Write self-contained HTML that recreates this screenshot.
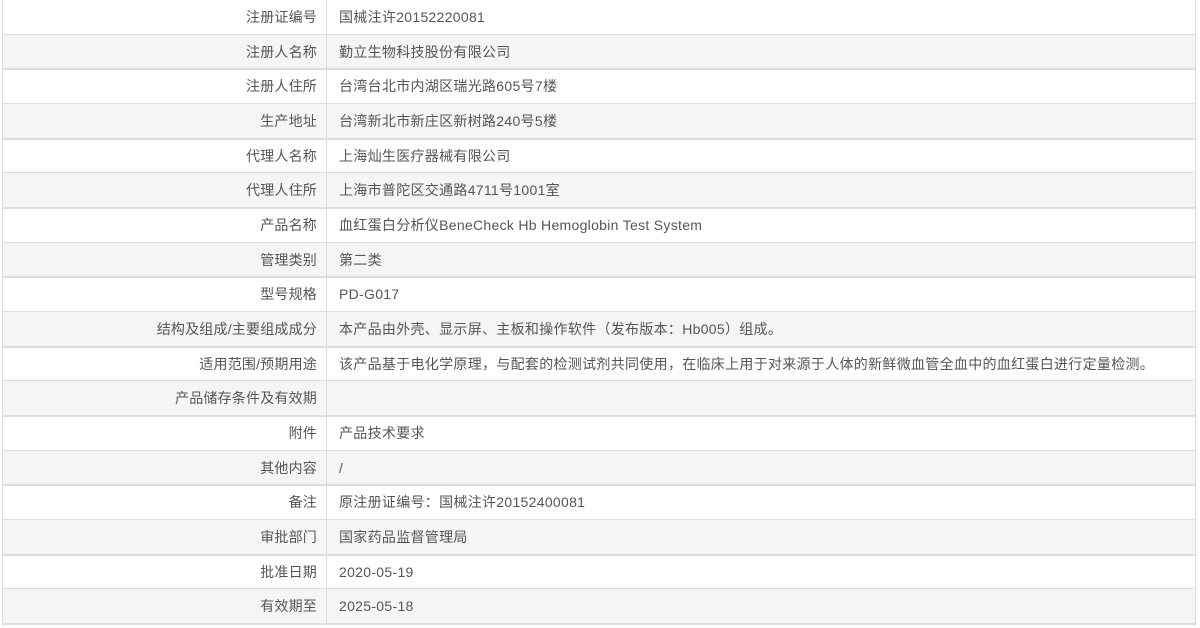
<!DOCTYPE html>
<html><head><meta charset="utf-8"><style>
body{margin:0;width:1200px;height:628px;background:#fff;overflow:hidden;font-family:"Liberation Sans","Noto Sans CJK SC",sans-serif;font-size:14px;color:#555}
.t{position:absolute;left:2px;top:0;width:1192px;border-left:1px solid #ddd;border-right:1px solid #ddd}
.r{position:absolute;left:0;width:1192px;border-bottom:2px solid #ddd;box-sizing:border-box}
.r:nth-child(even){background:#f5f5f5}
.l{position:absolute;left:0;width:324px;top:0;bottom:0;border-right:1px solid #ddd;text-align:right;box-sizing:border-box;padding-right:9px;display:flex;align-items:center;justify-content:flex-end;letter-spacing:0.2px}
.v{position:absolute;left:336px;top:0;bottom:0;display:flex;align-items:center;white-space:nowrap;letter-spacing:0.3px}
</style></head><body><div class="t" id="t">
<div class="r"><div class="l">注册证编号</div><div class="v">国械注许20152220081</div></div>
<div class="r"><div class="l">注册人名称</div><div class="v">勤立生物科技股份有限公司</div></div>
<div class="r"><div class="l">注册人住所</div><div class="v">台湾台北市内湖区瑞光路605号7楼</div></div>
<div class="r"><div class="l">生产地址</div><div class="v">台湾新北市新庄区新树路240号5楼</div></div>
<div class="r"><div class="l">代理人名称</div><div class="v">上海灿生医疗器械有限公司</div></div>
<div class="r"><div class="l">代理人住所</div><div class="v">上海市普陀区交通路4711号1001室</div></div>
<div class="r"><div class="l">产品名称</div><div class="v">血红蛋白分析仪BeneCheck Hb Hemoglobin Test System</div></div>
<div class="r"><div class="l">管理类别</div><div class="v">第二类</div></div>
<div class="r"><div class="l">型号规格</div><div class="v">PD-G017</div></div>
<div class="r"><div class="l">结构及组成/主要组成成分</div><div class="v">本产品由外壳、显示屏、主板和操作软件（发布版本：Hb005）组成。</div></div>
<div class="r"><div class="l">适用范围/预期用途</div><div class="v">该产品基于电化学原理，与配套的检测试剂共同使用，在临床上用于对来源于人体的新鲜微血管全血中的血红蛋白进行定量检测。</div></div>
<div class="r"><div class="l">产品储存条件及有效期</div><div class="v"></div></div>
<div class="r"><div class="l">附件</div><div class="v">产品技术要求</div></div>
<div class="r"><div class="l">其他内容</div><div class="v">/</div></div>
<div class="r"><div class="l">备注</div><div class="v">原注册证编号：国械注许20152400081</div></div>
<div class="r"><div class="l">审批部门</div><div class="v">国家药品监督管理局</div></div>
<div class="r"><div class="l">批准日期</div><div class="v">2020-05-19</div></div>
<div class="r"><div class="l">有效期至</div><div class="v">2025-05-18</div></div>
</div>
<script>
var rs=document.querySelectorAll('.r');
for(var i=0;i<rs.length;i++){var a=Math.round(i*34.67),b=Math.round((i+1)*34.67)+1;rs[i].style.top=a+'px';rs[i].style.height=(b-a)+'px';}
document.getElementById('t').style.height='626px';
</script>
</body></html>
